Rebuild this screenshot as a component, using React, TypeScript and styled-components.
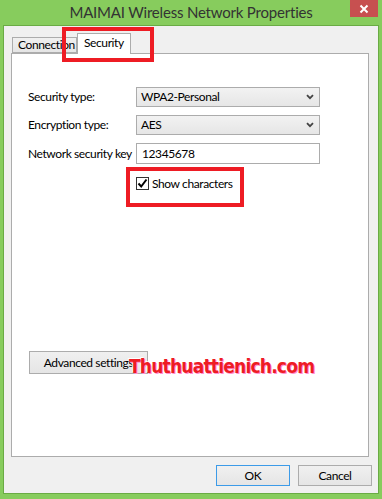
import styled, { createGlobalStyle } from "styled-components";

const GlobalStyle = createGlobalStyle`
    html, body {
        margin: 0;
        padding: 0;
        background: #87cc5d;
    }
    * {
        box-sizing: border-box;
    }
`;

const UI_FONT = `Lato, "Noto Sans", sans-serif`;
const RED = "#ee1c24";

const Frame = styled.div`
    position: relative;
    width: 382px;
    height: 499px;
    background: #87cc5d;
    padding: 0 3px 5px 3px;
    display: flex;
    flex-direction: column;
    font-family: ${UI_FONT};
    font-size: 12px;
    letter-spacing: -0.4px;
    color: #000;
`;

const TitleBar = styled.div`
    height: 25px;
    display: grid;
    grid-template-columns: 1fr auto 1fr;
    align-items: start;
`;

const Title = styled.div`
    grid-column: 2;
    font-size: 15px;
    letter-spacing: -0.2px;
    line-height: 24px;
    color: #333;
    white-space: nowrap;
`;

const CloseButton = styled.div`
    grid-column: 3;
    justify-self: end;
    margin-right: 1px;
    width: 28px;
    height: 17px;
    background: #c75050;
    display: flex;
    align-items: center;
    justify-content: center;
`;

const Client = styled.div`
    flex: 1;
    border: 1px solid #6aab44;
    background: #f0f0f0;
    padding: 7px 0 0 7px;
    display: flex;
    flex-direction: column;
`;

const TabRow = styled.div`
    height: 20px;
    display: flex;
    align-items: flex-end;
    padding-left: 1px;
    position: relative;
    z-index: 1;
`;

const Tab = styled.div<{ $active?: boolean }>`
    height: ${(p) => (p.$active ? "21px" : "16px")};
    margin-bottom: ${(p) => (p.$active ? "-1px" : "0")};
    padding: ${(p) => (p.$active ? "2px 0 0 6px" : "0 0 0 5px")};
    width: ${(p) => (p.$active ? "54px" : "65px")};
    border: 1px solid #acacac;
    border-bottom: ${(p) => (p.$active ? "none" : "1px solid #acacac")};
    background: ${(p) =>
        p.$active ? "#fff" : "linear-gradient(#f0f0f0, #e5e5e5)"};
    line-height: 14px;
    font-size: 12px;
    color: #000;
    white-space: nowrap;
`;

const Panel = styled.div`
    width: 358px;
    height: 404px;
    background: #fff;
    border: 1px solid #acacac;
    padding: 33px 0 0 16px;
    display: flex;
    flex-direction: column;
`;

const FormGrid = styled.div`
    display: grid;
    grid-template-columns: 108px 184px;
    row-gap: 8px;
    align-items: center;
`;

const Label = styled.div`
    white-space: nowrap;
    line-height: 20px;
`;

const Select = styled.div`
    height: 20px;
    border: 1px solid #acacac;
    background: linear-gradient(#f2f2f2, #e6e6e6);
    display: flex;
    align-items: center;
    justify-content: space-between;
    padding: 0 5px 0 4px;
    line-height: 18px;
`;

const TextBox = styled.div`
    height: 21px;
    border: 1px solid #acacac;
    background: #fff;
    padding-left: 5px;
    line-height: 19px;
`;

const CheckRow = styled.div`
    margin: 12px 0 0 108px;
    display: flex;
    align-items: center;
    gap: 3px;
    height: 14px;
`;

const CheckBox = styled.div`
    width: 13px;
    height: 13px;
    border: 1px solid #333;
    background: #fff;
    display: flex;
    align-items: center;
    justify-content: center;
`;

const PushButton = styled.div<{ $focused?: boolean; $width: number }>`
    width: ${(p) => p.$width}px;
    height: ${(p) => (p.$focused !== undefined ? "21px" : "23px")};
    border: 1px solid ${(p) => (p.$focused ? "#3c9be8" : "#acacac")};
    background: linear-gradient(#f0f0f0, #e5e5e5);
    display: flex;
    align-items: center;
    justify-content: center;
    white-space: nowrap;
    color: #000;
`;

const AdvancedWrap = styled.div`
    margin: 161px 0 0 1px;
`;

const ButtonRow = styled.div`
    display: flex;
    justify-content: flex-end;
    gap: 8px;
    margin-top: 8px;
    padding-right: 6px;
`;

const Highlight = styled.div<{ $x: number; $y: number; $w: number; $h: number }>`
    position: absolute;
    left: ${(p) => p.$x}px;
    top: ${(p) => p.$y}px;
    width: ${(p) => p.$w}px;
    height: ${(p) => p.$h}px;
    border: 4px solid ${RED};
    pointer-events: none;
    z-index: 5;
`;

const Watermark = styled.div`
    position: absolute;
    left: 129px;
    top: 355px;
    font-family: "DejaVu Sans Condensed", "DejaVu Sans", sans-serif;
    font-stretch: condensed;
    font-weight: bold;
    font-size: 19px;
    line-height: 22px;
    color: ${RED};
    letter-spacing: -0.8px;
    text-shadow:
        1px 1px 0 #ff8fd0,
        -1px -1px 0 #fff;
    z-index: 6;
`;

function Chevron() {
    return (
        <svg width="8" height="6" viewBox="0 0 8 6">
            <path d="M1 1.2 L4 4.2 L7 1.2" fill="none" stroke="#444" strokeWidth="1.8" />
        </svg>
    );
}

export default function App() {
    return (
        <>
            <GlobalStyle />
            <Frame>
                <TitleBar>
                    <Title>MAIMAI Wireless Network Properties</Title>
                    <CloseButton>
                        <svg width="10" height="10" viewBox="0 0 10 10">
                            <path d="M1.5 1.5 L8.5 8.5 M8.5 1.5 L1.5 8.5" stroke="#fff" strokeWidth="2" />
                        </svg>
                    </CloseButton>
                </TitleBar>
                <Client>
                    <TabRow>
                        <Tab>Connection</Tab>
                        <Tab $active>Security</Tab>
                    </TabRow>
                    <Panel>
                        <FormGrid>
                            <Label>Security type:</Label>
                            <Select>
                                <span>WPA2-Personal</span>
                                <Chevron />
                            </Select>
                            <Label>Encryption type:</Label>
                            <Select>
                                <span>AES</span>
                                <Chevron />
                            </Select>
                            <Label>Network security key</Label>
                            <TextBox>12345678</TextBox>
                        </FormGrid>
                        <CheckRow>
                            <CheckBox>
                                <svg width="11" height="11" viewBox="0 0 11 11">
                                    <path d="M1.5 5.5 L4.2 8.5 L9.5 1.5" fill="none" stroke="#000" strokeWidth="2" />
                                </svg>
                            </CheckBox>
                            <span>Show characters</span>
                        </CheckRow>
                        <AdvancedWrap>
                            <PushButton $width={119}>Advanced settings</PushButton>
                        </AdvancedWrap>
                    </Panel>
                    <ButtonRow>
                        <PushButton $width={74} $focused>
                            OK
                        </PushButton>
                        <PushButton $width={74} $focused={false}>
                            Cancel
                        </PushButton>
                    </ButtonRow>
                </Client>
                <Highlight $x={62} $y={27} $w={92} $h={35} />
                <Highlight $x={126} $y={167} $w={118} $h={40} />
                <Watermark>Thuthuattienich.com</Watermark>
            </Frame>
        </>
    );
}
